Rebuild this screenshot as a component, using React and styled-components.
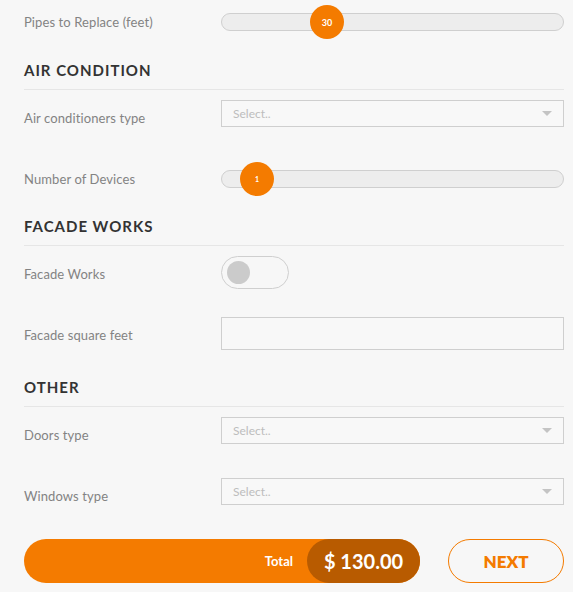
import React from 'react'
import styled, { createGlobalStyle } from 'styled-components'

const GlobalStyle = createGlobalStyle`
  html, body {
    margin: 0;
    padding: 0;
    background: #f7f7f7;
    font-family: 'Lato', 'Open Sans', sans-serif;
  }
`

const Page = styled.div`
  width: 573px;
  height: 592px;
  box-sizing: border-box;
  padding: 4px 9px 0 24px;
  overflow: hidden;
`

const Row = styled.div`
  display: grid;
  grid-template-columns: 197px 1fr;
  height: 36px;
  & + & {
    margin-top: 25px;
  }
`

const Label = styled.div`
  align-self: center;
  font-size: 13px;
  letter-spacing: 0.1px;
  color: #838383;
`

const Heading = styled.h3`
  margin: ${(p) => p.$top || 20}px 0 10px;
  padding-bottom: 9px;
  border-bottom: 1px solid #e6e6e6;
  font-size: 15px;
  line-height: 20px;
  font-weight: 700;
  letter-spacing: 1px;
  color: #333;
  text-transform: uppercase;
`

const Track = styled.div`
  position: relative;
  align-self: center;
  height: 18px;
  box-sizing: border-box;
  border: 1px solid #cfcfcf;
  border-radius: 9px;
  background: #ededed;
`

const Handle = styled.div`
  position: absolute;
  top: 50%;
  left: ${(p) => p.$left}px;
  width: 34px;
  height: 34px;
  margin: -17px 0 0 -17px;
  border-radius: 50%;
  background: #f47b00;
  color: #fff;
  font-size: ${(p) => (p.$small ? 7 : 9)}px;
  font-weight: 700;
  display: flex;
  align-items: center;
  justify-content: center;
`

const SelectBox = styled.div`
  align-self: start;
  height: 27px;
  box-sizing: border-box;
  border: 1px solid #cfcfcf;
  background: #f8f8f8;
  display: flex;
  align-items: center;
  justify-content: space-between;
  padding: 0 11px;
  font-size: 12px;
  color: #bdbdbd;
`

const Caret = styled.span`
  width: 0;
  height: 0;
  border-left: 5px solid transparent;
  border-right: 5px solid transparent;
  border-top: 5px solid #c4c4c4;
`

const Toggle = styled.div`
  align-self: start;
  width: 68px;
  height: 33px;
  box-sizing: border-box;
  border: 1px solid #cfcfcf;
  border-radius: 17px;
  display: flex;
  align-items: center;
  padding-left: 5px;
`

const Knob = styled.span`
  width: 23px;
  height: 23px;
  border-radius: 50%;
  background: #cbcbcb;
`

const TextInput = styled.div`
  align-self: start;
  height: 33px;
  box-sizing: border-box;
  border: 1px solid #cfcfcf;
  background: #f8f8f8;
`

const Footer = styled.div`
  display: flex;
  gap: 28px;
  margin-top: 25px;
`

const TotalBar = styled.div`
  width: 396px;
  height: 44px;
  border-radius: 22px;
  background: #f47b00;
  display: flex;
  align-items: center;
  justify-content: flex-end;
`

const TotalLabel = styled.span`
  color: #fff;
  font-size: 13px;
  font-weight: 700;
  margin-right: 14px;
`

const TotalValue = styled.span`
  width: 113px;
  height: 44px;
  border-radius: 22px;
  background: #b85b00;
  color: #fff;
  font-size: 20px;
  font-weight: 700;
  display: flex;
  align-items: center;
  justify-content: center;
`

const NextButton = styled.button`
  width: 116px;
  height: 44px;
  border: 1px solid #f47b00;
  border-radius: 22px;
  background: transparent;
  color: #f47b00;
  font-family: inherit;
  font-size: 17px;
  font-weight: 800;
`

const Slider = ({ left, value }) => (
  <Track>
    <Handle $left={left} $small={value < 10}>{value}</Handle>
  </Track>
)

const Select = () => (
  <SelectBox>
    Select..
    <Caret />
  </SelectBox>
)

const App = () => {
  return (
    <Page>
      <GlobalStyle />
      <Row>
        <Label>Pipes to Replace (feet)</Label>
        <Slider left={105} value={30} />
      </Row>

      <Heading>Air Condition</Heading>
      <Row>
        <Label>Air conditioners type</Label>
        <Select />
      </Row>
      <Row>
        <Label>Number of Devices</Label>
        <Slider left={35} value={1} />
      </Row>

      <Heading $top={19}>Facade Works</Heading>
      <Row>
        <Label>Facade Works</Label>
        <Toggle>
          <Knob />
        </Toggle>
      </Row>
      <Row>
        <Label>Facade square feet</Label>
        <TextInput />
      </Row>

      <Heading $top={24}>Other</Heading>
      <Row>
        <Label>Doors type</Label>
        <Select />
      </Row>
      <Row>
        <Label>Windows type</Label>
        <Select />
      </Row>

      <Footer>
        <TotalBar>
          <TotalLabel>Total</TotalLabel>
          <TotalValue>$ 130.00</TotalValue>
        </TotalBar>
        <NextButton>NEXT</NextButton>
      </Footer>
    </Page>
  )
}

export default App
